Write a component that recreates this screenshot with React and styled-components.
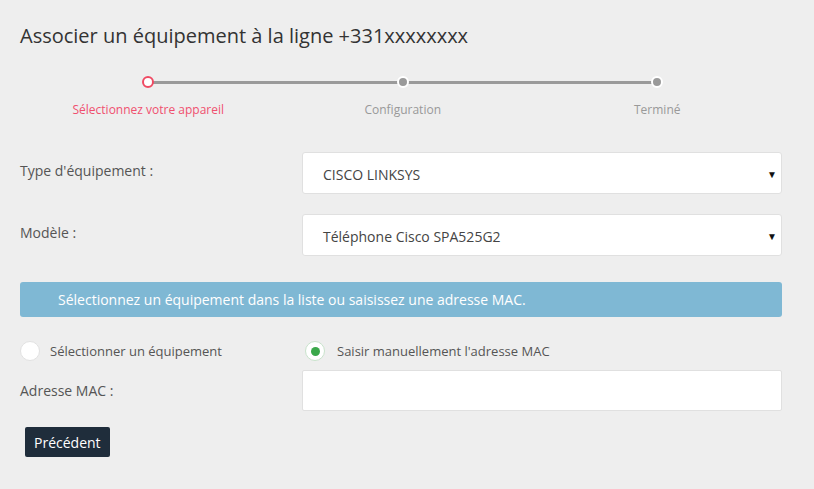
import React from "react";
import styled, { createGlobalStyle } from "styled-components";

const Global = createGlobalStyle`
  html, body { margin: 0; padding: 0; background: #eeeeee; }
  body { font-family: "Open Sans", "Liberation Sans", sans-serif; color: #555; }
  * { box-sizing: border-box; }
`;

const Page = styled.div`
  width: 814px;
  height: 489px;
  padding: 22px 32px 0 20px;
  background: #eeeeee;
`;

const Title = styled.h1`
  margin: 0;
  font-size: 20px;
  font-weight: 400;
  color: #333;
  line-height: 27px;
`;

const Stepper = styled.div`
  display: grid;
  grid-template-columns: repeat(3, 254.5px);
  margin: 27px 0 0 1px;
  width: 764px;
`;

const Step = styled.div`
  position: relative;
  display: flex;
  flex-direction: column;
  align-items: center;
`;

const Track = styled.div`
  position: absolute;
  top: 5px;
  left: 50%;
  width: 100%;
  height: 3px;
  background: #9a9a9a;
`;

const Dot = styled.span`
  position: relative;
  z-index: 1;
  width: 12px;
  height: 12px;
  border-radius: 50%;
  border: 2px solid ${(p) => (p.$active ? "#ef4a63" : "#ffffff")};
  background: ${(p) => (p.$active ? "#ffffff" : "#9a9a9a")};
`;

const StepLabel = styled.span`
  margin-top: 13px;
  font-size: 12px;
  color: ${(p) => (p.$active ? "#f0506e" : "#999")};
`;

const FormGrid = styled.div`
  display: grid;
  grid-template-columns: 282px 480px;
  align-items: center;
  margin-top: ${(p) => p.$mt ?? 34}px;
`;

const Label = styled.div`
  font-size: 14px;
  color: #555;
  padding-bottom: ${(p) => p.$pb || 0}px;
`;

const Select = styled.div`
  position: relative;
  height: 42px;
  background: #fff;
  border: 1px solid #e0e0e0;
  border-radius: 3px;
  display: flex;
  align-items: center;
  padding: 2px 0 0 20px;
  font-size: 14px;
  color: #444;
  margin-bottom: ${(p) => p.$mb || 0}px;
`;

const Arrow = styled.span`
  position: absolute;
  right: 4px;
  top: 14px;
  font-size: 10px;
  color: #111;
`;

const Banner = styled.div`
  margin-top: 26px;
  width: 762px;
  height: 35px;
  background: #7fb8d4;
  border-radius: 3px;
  color: #fff;
  font-size: 14px;
  display: flex;
  align-items: center;
  padding-left: 38px;
`;

const RadioRow = styled.div`
  display: grid;
  grid-template-columns: 285px 1fr;
  margin-top: 24px;
  height: 20px;
  align-items: center;
`;

const RadioOption = styled.label`
  display: flex;
  align-items: center;
  gap: ${(p) => p.$gap || 10}px;
  font-size: 13px;
  color: #555;
`;

const RadioCircle = styled.span`
  width: 20px;
  height: 20px;
  border-radius: 50%;
  background: #fff;
  border: 1px solid ${(p) => (p.$checked ? "#c9e3cc" : "#e2e2e2")};
  display: flex;
  align-items: center;
  justify-content: center;
  &::after {
    content: "";
    width: 9px;
    height: 9px;
    border-radius: 50%;
    background: ${(p) => (p.$checked ? "#3aa84a" : "transparent")};
  }
`;

const Input = styled.div`
  height: 41px;
  background: #fff;
  border: 1px solid #e0e0e0;
  border-radius: 2px;
`;

const Button = styled.button`
  margin: 16px 0 0 5px;
  height: 30px;
  padding: 0 9px;
  background: #1f2d3b;
  color: #fff;
  border: none;
  border-radius: 2px;
  font-family: inherit;
  font-size: 14px;
`;

export default function App() {
  const steps = [
    { label: "Sélectionnez votre appareil", active: true },
    { label: "Configuration" },
    { label: "Terminé" },
  ];
  return (
    <>
      <Global />
      <Page>
        <Title>Associer un équipement à la ligne +331xxxxxxxx</Title>
        <Stepper>
          {steps.map((s, i) => (
            <Step key={s.label}>
              {i < steps.length - 1 && <Track />}
              <Dot $active={s.active} />
              <StepLabel $active={s.active}>{s.label}</StepLabel>
            </Step>
          ))}
        </Stepper>
        <FormGrid>
          <Label $pb={25}>Type d'équipement :</Label>
          <Select $mb={20}>
            CISCO LINKSYS<Arrow>▼</Arrow>
          </Select>
          <Label $pb={5}>Modèle :</Label>
          <Select>
            Téléphone Cisco SPA525G2<Arrow>▼</Arrow>
          </Select>
        </FormGrid>
        <Banner>Sélectionnez un équipement dans la liste ou saisissez une adresse MAC.</Banner>
        <RadioRow>
          <RadioOption>
            <RadioCircle />
            Sélectionner un équipement
          </RadioOption>
          <RadioOption $gap={12}>
            <RadioCircle $checked />
            Saisir manuellement l'adresse MAC
          </RadioOption>
        </RadioRow>
        <FormGrid $mt={9}>
          <Label>Adresse MAC :</Label>
          <Input />
        </FormGrid>
        <Button>Précédent</Button>
      </Page>
    </>
  );
}
